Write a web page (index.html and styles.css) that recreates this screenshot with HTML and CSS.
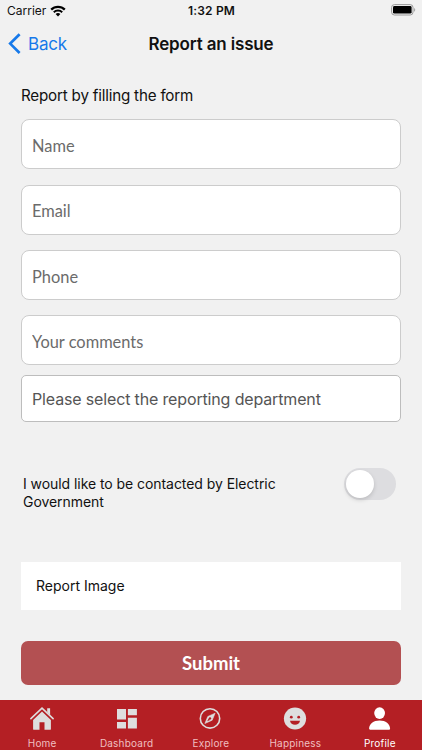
FILE: index.html
```html
<!DOCTYPE html>
<html lang="en">
<head>
    <meta charset="UTF-8">
    <meta name="viewport" content="width=device-width, initial-scale=1.0">
    <title>Report an issue</title>
    <link rel="stylesheet" href="styles.css">
</head>
<body>
    <div class="status-bar">
        <div class="carrier">
            <span>Carrier</span>
            <svg width="16" height="12" viewBox="0 0 16 12">
                <path d="M1.2 4.6a9.7 9.7 0 0 1 13.6 0" fill="none" stroke="#000" stroke-width="2.3"/>
                <path d="M3.8 7.2a6 6 0 0 1 8.4 0" fill="none" stroke="#000" stroke-width="2"/>
                <path d="M8 11.5L5.6 9.1a3.4 3.4 0 0 1 4.8 0z"/>
            </svg>
        </div>
        <div class="time">1:32 PM</div>
        <div class="battery">
            <svg width="25" height="12" viewBox="0 0 25 12">
                <rect x="0.6" y="0.6" width="21.4" height="10.4" rx="2.8" fill="none" stroke="#999" stroke-width="1"/>
                <rect x="2" y="2" width="18.6" height="7.6" rx="1.4"/>
                <path d="M23.3 4.1v3.6c1.2-.5 1.2-3.1 0-3.6z" fill="#888"/>
            </svg>
        </div>
    </div>

    <div class="header">
        <a class="back" href="#">
            <svg width="13" height="22" viewBox="0 0 13 22">
                <path d="M11.6 1.2L2.2 10.6l9.4 9.4" fill="none" stroke="#1679ea" stroke-width="2.7"/>
            </svg>
            <span>Back</span>
        </a>
        <h1>Report an issue</h1>
    </div>

    <form class="report-form">
        <h2>Report by filling the form</h2>
        <input type="text" name="name" placeholder="Name">
        <input type="text" name="email" placeholder="Email">
        <input type="text" name="phone" placeholder="Phone">
        <input type="text" name="comments" placeholder="Your comments">
        <div class="department">Please select the reporting department</div>

        <div class="contact-row">
            <p>I would like to be contacted by Electric Government</p>
            <div class="switch"><div class="knob"></div></div>
        </div>

        <div class="report-image">Report Image</div>
        <button type="button" class="submit">Submit</button>
    </form>

    <div class="tab-bar">
        <div class="tab">
            <svg width="24" height="24" viewBox="0 0 24 24">
                <path d="M12 4.6L3.1 12.9v9c0 .5.4.9.9.9h5.5v-7.6h5v7.6H20c.5 0 .9-.4.9-.9v-9z"/>
                <path d="M.9 11.6L12 1.2l11.1 10.4" fill="none" stroke="#dedede" stroke-width="1.6" stroke-linecap="round"/>
                <path d="M17.2 1.3h2.9v6.6l-2.9-2.7z"/>
            </svg>
            <span>Home</span>
        </div>
        <div class="tab">
            <svg width="24" height="24" viewBox="0 0 24 24">
                <path d="M2 2h9v10.6H2zM12.9 2h9v6.2h-9zM2 15h9v6.5H2zM12.9 10.7h9v10.8h-9z"/>
            </svg>
            <span>Dashboard</span>
        </div>
        <div class="tab">
            <svg width="24" height="24" viewBox="0 0 24 24">
                <circle cx="11" cy="11.4" r="9.7" fill="none" stroke="#dedede" stroke-width="1.6"/>
                <path d="M16.1 6.2l-7.3 3.3-2.9 7 7.3-3.3z" stroke="#dedede" stroke-width="0.6" stroke-linejoin="round"/>
                <circle cx="11" cy="11.4" r="1.2" fill="#b41f24"/>
                <path d="M8.2 14.3l1.4-2.7 1.5 1.4z" fill="#b41f24"/>
            </svg>
            <span>Explore</span>
        </div>
        <div class="tab">
            <svg width="24" height="24" viewBox="0 0 24 24">
                <circle cx="12" cy="11.5" r="11.1"/>
                <circle cx="8.3" cy="10.2" r="1.4" fill="#b41f24"/>
                <circle cx="15.7" cy="10.2" r="1.4" fill="#b41f24"/>
                <path d="M7 13.7h10c-.4 2.4-2.4 4-5 4s-4.600-1.600-5-4z" fill="#b41f24"/>
            </svg>
            <span>Happiness</span>
        </div>
        <div class="tab active">
            <svg width="24" height="24" viewBox="0 0 24 24">
                <ellipse cx="11.6" cy="6.1" rx="5.4" ry="5.8"/>
                <path d="M1.1 21.8c0-5 4.5-8.400 10.500-8.400s10.500 3.400 10.500 8.400c0 .5-.4.9-1 .9h-19c-.6 0-1-.4-1-.9z"/>
            </svg>
            <span>Profile</span>
        </div>
    </div>
</body>
</html>
```
FILE: styles.css
```css
* {
    box-sizing: border-box;
}
body {
    font-family: Inter, sans-serif;
    margin: 0;
    height: 750px;
    display: flex;
    flex-direction: column;
    background-color: #f1f1f1;
    color: #111;
    overflow: hidden;
}
.status-bar {
    height: 22px;
    padding: 0 6px 0 7px;
    display: grid;
    grid-template-columns: 1fr auto 1fr;
    align-items: center;
    font-size: 12px;
    line-height: 20px;
}
.carrier {
    display: flex;
    align-items: center;
    gap: 4px;
}
.time {
    font-weight: 600;
    letter-spacing: 0.2px;
}
.battery {
    display: flex;
    justify-content: flex-end;
    margin-bottom: 2px;
}
.header {
    height: 44px;
    padding: 0 8px;
    display: grid;
    grid-template-columns: 1fr auto 1fr;
    align-items: center;
}
.back {
    display: flex;
    align-items: center;
    gap: 7px;
    color: #1679ea;
    font-size: 17px;
    letter-spacing: -0.2px;
    text-decoration: none;
}
.header h1 {
    margin: 0 0 1px;
    font-size: 17px;
    font-weight: 600;
    letter-spacing: -0.15px;
}
.report-form {
    flex: 1;
    padding: 0 21px;
    display: flex;
    flex-direction: column;
}
.report-form h2 {
    margin: 20px 0 13.3px;
    font-size: 15.2px;
    line-height: 20px;
    font-weight: 400;
    letter-spacing: -0.2px;
}
.report-form input {
    width: 100%;
    height: 50px;
    margin: 0 0 15.4px;
    padding: 2px 10px 0;
    border: 1px solid #ccc;
    border-radius: 8px;
    background-color: white;
    font-family: Lato, sans-serif;
    font-size: 16.4px;
}
.report-form input::placeholder {
    color: #6b6b6b;
}
.department {
    height: 47px;
    margin-top: -5.5px;
    padding: 0 10px;
    border: 1px solid #bdbdbd;
    border-radius: 5px;
    background-color: white;
    color: #555;
    font-size: 16px;
    line-height: 46px;
    letter-spacing: -0.15px;
}
.contact-row {
    display: flex;
    justify-content: space-between;
    margin-top: 45.7px;
    padding: 0 5px 0 2px;
}
.contact-row p {
    width: 270px;
    margin: 7px 0 0;
    font-size: 14px;
    line-height: 17.5px;
    letter-spacing: -0.06px;
}
.switch {
    width: 52px;
    height: 32px;
    padding: 2px;
    border-radius: 16px;
    background-color: #dddde0;
}
.knob {
    width: 28px;
    height: 28px;
    border-radius: 50%;
    background-color: white;
    box-shadow: 0 2px 4px rgba(0, 0, 0, 0.15);
}
.report-image {
    height: 48px;
    margin-top: 52px;
    padding: 0 15px;
    background-color: white;
    font-size: 14px;
    line-height: 48px;
}
.submit {
    height: 44px;
    margin-top: 31px;
    border: none;
    border-radius: 7px;
    background-color: #b35052;
    color: white;
    font-family: Lato, sans-serif;
    font-size: 18.5px;
    font-weight: bold;
}
.tab-bar {
    height: 50px;
    display: grid;
    grid-template-columns: repeat(5, 1fr);
    background-color: #b41f24;
}
.tab {
    display: flex;
    flex-direction: column;
    align-items: center;
    padding-top: 7px;
    color: #f0bfc0;
    font-size: 10px;
    line-height: 13px;
    letter-spacing: 0.2px;
}
.tab svg {
    margin-bottom: 6px;
    fill: #dedede;
}
.tab.active {
    color: white;
}
.tab.active svg {
    fill: white;
}
```
